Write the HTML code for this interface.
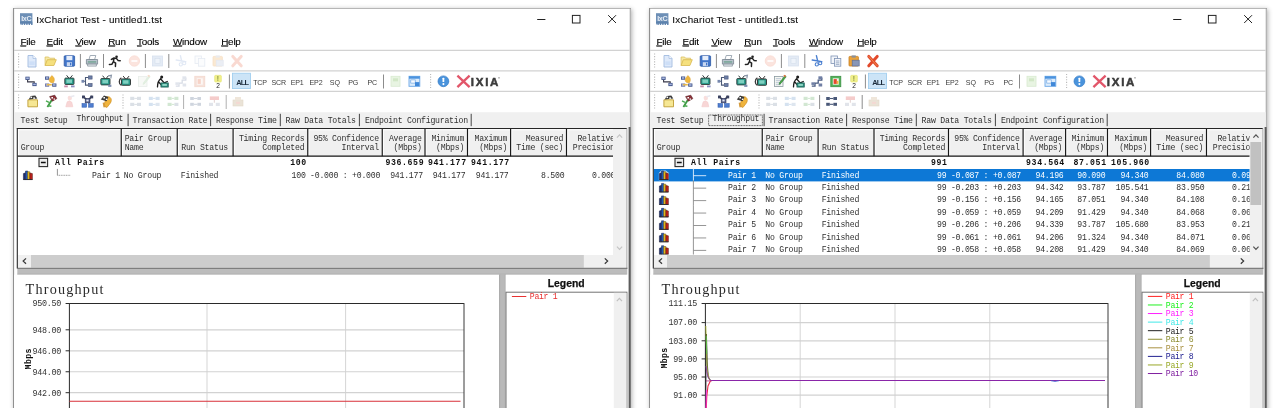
<!DOCTYPE html>
<html lang="en"><head><meta charset="utf-8"><title>IxChariot Test - untitled1.tst</title>
<style>
html,body{margin:0;padding:0;background:#fff;}
body{width:1280px;height:408px;overflow:hidden;position:relative;}
.sh{position:absolute;top:8px;width:617px;height:420px;box-shadow:1px 1px 4.5px 0.5px rgba(0,0,0,.3);background:#fff;}
svg{position:absolute;left:0;top:0;will-change:transform;}
text{font-family:"Liberation Mono",monospace;font-size:8.2px;fill:#303030;white-space:pre;}
.m{letter-spacing:-0.24px;}
.w{fill:#ffffff;}
.mb{font-weight:bold;letter-spacing:0.62px;fill:#111;}
.ax{font-size:8.4px;letter-spacing:-0.3px;fill:#333;}
.lm{font-size:8.2px;letter-spacing:-0.32px;}
.mbps{font-weight:bold;font-size:8.2px;letter-spacing:0.4px;fill:#111;}
.gt{font-family:"Liberation Serif",serif;font-size:14.2px;letter-spacing:1.2px;fill:#2a2a2a;}
.title{font-family:"Liberation Sans",sans-serif;font-size:9.9px;letter-spacing:0.22px;fill:#111;stroke:#111;stroke-width:0.12px;}
.mn{font-family:"Liberation Sans",sans-serif;font-size:9.9px;letter-spacing:-0.22px;fill:#000;stroke:#000;stroke-width:0.12px;}
.tb{font-family:"Liberation Sans",sans-serif;font-size:7.1px;letter-spacing:-0.15px;fill:#3c3c3c;}
.tbb{font-family:"Liberation Sans",sans-serif;font-size:7.4px;font-weight:bold;letter-spacing:-0.7px;fill:#1a2a3a;}
.tiny{font-family:"Liberation Sans",sans-serif;font-size:6.6px;}
.ticon{font-family:"Liberation Sans",sans-serif;font-size:7.2px;font-weight:bold;letter-spacing:-0.35px;fill:#e6edf5;}
.ixia{font-family:"Liberation Sans",sans-serif;font-size:11.5px;font-weight:bold;fill:#3c3c3c;letter-spacing:1.75px;stroke:#3c3c3c;stroke-width:0.5px;}
.lg{font-family:"Liberation Sans",sans-serif;font-size:10.4px;font-weight:bold;fill:#111;stroke:#111;stroke-width:0.25px;}
</style></head>
<body>
<div class="sh" style="left:13px"></div>
<div class="sh" style="left:649px"></div>
<svg width="1280" height="408" viewBox="0 0 1280 408">
<defs><filter id="gb" x="0" y="0" width="100%" height="100%"><feGaussianBlur stdDeviation="0.3"/></filter><filter id="soft" x="-2%" y="-10%" width="104%" height="120%"><feGaussianBlur stdDeviation="0.4"/></filter></defs>
<g transform="translate(0,0)" filter="url(#gb)">
<rect x="13.60" y="8.10" width="616.80" height="420.00" fill="#ffffff" stroke="#858585" stroke-width="1.0" />
<line x1="630.40" y1="8.60" x2="630.40" y2="127.20" stroke="#b4b4b4" stroke-width="1.2" />
<rect x="20.00" y="13.20" width="12.40" height="11.60" fill="#6d8fb6" />
<rect x="20.00" y="21.60" width="12.40" height="3.20" fill="#5d82ad" />
<text x="26.20" y="21.00" class="ticon" text-anchor="middle" >IxC</text>
<line x1="20.40" y1="24.40" x2="32.40" y2="24.40" stroke="#ffffff" stroke-width="1.2" stroke-dasharray="1 1.4"/>
<text x="36.20" y="23.20" class="title" >IxChariot Test - untitled1.tst</text>
<line x1="537.20" y1="19.50" x2="545.40" y2="19.50" stroke="#222" stroke-width="1.0" />
<rect x="572.40" y="15.40" width="7.60" height="7.60" fill="none" stroke="#222" stroke-width="1.0" />
<path d="M608.2 15.2l7.8 7.8M616 15.2l-7.8 7.8" fill="none" stroke="#222" stroke-width="1.0" />
<text x="20.40" y="44.50" class="mn"><tspan text-decoration="underline">F</tspan>ile</text>
<text x="46.60" y="44.50" class="mn"><tspan text-decoration="underline">E</tspan>dit</text>
<text x="75.40" y="44.50" class="mn"><tspan text-decoration="underline">V</tspan>iew</text>
<text x="108.20" y="44.50" class="mn"><tspan text-decoration="underline">R</tspan>un</text>
<text x="137.00" y="44.50" class="mn"><tspan text-decoration="underline">T</tspan>ools</text>
<text x="173.00" y="44.50" class="mn"><tspan text-decoration="underline">W</tspan>indow</text>
<text x="221.20" y="44.50" class="mn"><tspan text-decoration="underline">H</tspan>elp</text>
<line x1="14.10" y1="50.40" x2="629.70" y2="50.40" stroke="#d2d2d2" stroke-width="1.3" />
<line x1="14.10" y1="70.90" x2="629.70" y2="70.90" stroke="#d2d2d2" stroke-width="1.3" />
<line x1="14.10" y1="91.30" x2="629.70" y2="91.30" stroke="#d2d2d2" stroke-width="1.3" />
<rect x="14.10" y="112.20" width="615.60" height="16.60" fill="#f0f0f0" />
<g filter="url(#soft)">
<line x1="18.60" y1="53.50" x2="18.60" y2="68.50" stroke="#b8b8b8" stroke-width="1.1" stroke-dasharray="1.1 1.5"/>
<path d="M28 55.5h5l3 3v8.5h-8z" fill="#dfeafa" stroke="#a3bce0" stroke-width="0.9" />
<path d="M33 55.5v3h3" fill="#f6f9fe" stroke="#a3bce0" stroke-width="0.7" />
<rect x="29.40" y="61.40" width="5.20" height="3.60" fill="#c9dcf6" opacity="0.8" />
<path d="M45.1 65.5v-8.5h3.5l1 1.2h5v2" fill="#f7e9a4" stroke="#dcc062" stroke-width="0.8" />
<path d="M45.1 65.5l2.2-5.8h9l-2.4 5.8z" fill="#f5e07e" stroke="#d8b84e" stroke-width="0.8" />
<rect x="64.20" y="55.80" width="10.40" height="10.40" fill="#3f74c9" stroke="#2d59a5" stroke-width="0.8" rx="0.8" />
<rect x="66.40" y="56.00" width="6.00" height="4.20" fill="#e6eefb" />
<rect x="66.80" y="62.20" width="5.20" height="3.80" fill="#c8d7f0" />
<rect x="70.00" y="62.80" width="1.30" height="2.60" fill="#3f74c9" />
<line x1="80.40" y1="54.00" x2="80.40" y2="68.00" stroke="#8c8c8c" stroke-width="1.0" />
<path d="M89 59.5l1.2-4h5.6l-1.2 4z" fill="#ffffff" stroke="#8c98a5" stroke-width="0.8" />
<path d="M86.4 59.5h11.2v4.6h-11.2z" fill="#b9c3cd" stroke="#77848f" stroke-width="0.8" />
<path d="M87.6 64.1h8.8v2h-8.8z" fill="#e6ebef" stroke="#7e8a94" stroke-width="0.7" />
<rect x="87.80" y="61.40" width="8.40" height="1.10" fill="#5f9a82" />
<line x1="103.50" y1="54.00" x2="103.50" y2="68.00" stroke="#8c8c8c" stroke-width="1.0" />
<circle cx="116.60" cy="56.70" r="1.30" fill="#222"/>
<path d="M111.4 59.4l2.6-1.4 2.6 0.6 1.6 2 2 0.2 M114 58.4l-0.6 3.2 2.2 1.6-0.2 3.2 M113.4 61.6l-1.4 2.6-2.6 0.2" fill="none" stroke="#222" stroke-width="1.5" stroke-linecap="round" stroke-linejoin="round"/>
<g opacity="0.5">
<circle cx="134.40" cy="61.00" r="5.20" fill="#f6b9a8" stroke="#f0a08c" stroke-width="0.8" opacity="0.75"/>
<rect x="131.40" y="60.00" width="6.00" height="2.00" fill="#ffffff" opacity="0.8" />
</g>
<line x1="145.40" y1="54.00" x2="145.40" y2="68.00" stroke="#8c8c8c" stroke-width="1.0" />
<g opacity="0.6">
<rect x="152.50" y="56.00" width="10.00" height="10.00" fill="#c6d6ea" stroke="#aec2dc" stroke-width="0.8" opacity="0.8" />
<rect x="155.00" y="58.50" width="5.00" height="5.00" fill="#e6eef8" stroke="#b4c6de" stroke-width="0.6" opacity="0.9" />
</g>
<line x1="168.80" y1="54.00" x2="168.80" y2="68.00" stroke="#8c8c8c" stroke-width="1.0" />
<g opacity="0.5">
<path d="M176.2 60l9.6 1.6 M180.4 55.6l1.4 6" fill="none" stroke="#c3d2ea" stroke-width="1.4" stroke-linecap="round"/>
<circle cx="180.80" cy="64.40" r="1.60" fill="none" stroke="#c3d2ea" stroke-width="1.1"/>
<circle cx="184.20" cy="63.20" r="1.60" fill="none" stroke="#c3d2ea" stroke-width="1.1"/>
<rect x="195.00" y="56.00" width="6.40" height="7.60" fill="#f7f9fc" stroke="#cdd7e6" stroke-width="0.8" />
<rect x="198.40" y="58.60" width="6.40" height="7.60" fill="#f7f9fc" stroke="#cdd7e6" stroke-width="0.8" />
<rect x="213.00" y="56.40" width="9.40" height="9.60" fill="#f6d3a6" stroke="#efc28e" stroke-width="0.8" rx="0.8" />
<rect x="215.60" y="55.40" width="4.20" height="2.20" fill="#d6d8dc" />
<rect x="216.20" y="60.20" width="7.00" height="5.80" fill="#d8deea" stroke="#c8d0e0" stroke-width="0.7" />
<path d="M232.8 56.4l8.4 9.4 M241.2 56.4l-8.4 9.4" fill="none" stroke="#f3b4a4" stroke-width="3.0" stroke-linecap="round"/>
</g>
<line x1="18.60" y1="74.00" x2="18.60" y2="89.00" stroke="#b8b8b8" stroke-width="1.1" stroke-dasharray="1.1 1.5"/>
<rect x="25.40" y="76.70" width="4.20" height="3.20" fill="#3c4f86" />
<rect x="26.20" y="77.40" width="2.60" height="1.60" fill="#aab8e0" />
<rect x="32.40" y="82.90" width="4.20" height="3.20" fill="#3c4f86" />
<rect x="33.20" y="83.60" width="2.60" height="1.60" fill="#aab8e0" />
<path d="M27.6 79.89999999999999v2h6.6v1.2" fill="none" stroke="#3a3a4a" stroke-width="1.1" />
<rect x="45.00" y="76.50" width="4.20" height="3.20" fill="#3c4f86" />
<rect x="45.80" y="77.20" width="2.60" height="1.60" fill="#aab8e0" />
<rect x="52.20" y="83.50" width="4.20" height="3.20" fill="#3c4f86" />
<rect x="53.00" y="84.20" width="2.60" height="1.60" fill="#aab8e0" />
<rect x="45.00" y="83.50" width="4.20" height="3.20" fill="#6b74a8" />
<rect x="45.80" y="84.20" width="2.60" height="1.60" fill="#aab8e0" />
<path d="M51.800000000000004 75.5c2.6 2 3.4 4.4 1.6 7.2c-3.6 0.4-5-1.8-3.8-4.2z" fill="#efb73e" stroke="#d99a2a" stroke-width="0.5" />
<path d="M46.800000000000004 84.7h5" fill="none" stroke="#e8b84a" stroke-width="1.6" />
<path d="M66.60000000000001 75.3l2.4 3 M72.4 75.3l-2.4 3" fill="none" stroke="#2f3b3b" stroke-width="1.0" />
<rect x="64.80" y="78.10" width="9.20" height="6.40" fill="#2b9a8a" stroke="#2f3b3b" stroke-width="0.9" rx="0.8" />
<rect x="66.40" y="79.50" width="5.60" height="3.40" fill="#7fd0c0" />
<rect x="64.20" y="85.50" width="3.60" height="1.80" fill="#c98aa8" />
<rect x="71.00" y="85.50" width="3.60" height="1.80" fill="#8e8fc0" />
<path d="M82.1 81.3h3.4 M85.5 81.3v-3.8h3 M85.5 81.3v3.8h3" fill="none" stroke="#4c5a78" stroke-width="1.1" />
<rect x="81.50" y="79.90" width="2.60" height="2.80" fill="#7687ad" />
<rect x="88.50" y="75.90" width="3.60" height="3.20" fill="#6d7fa8" stroke="#465478" stroke-width="0.6" />
<rect x="88.50" y="83.50" width="3.60" height="3.20" fill="#6d7fa8" stroke="#465478" stroke-width="0.6" />
<path d="M102.60000000000001 75.7l2.4 3 M108.4 75.7l-2.4 3" fill="none" stroke="#2f3b3b" stroke-width="1.0" />
<rect x="100.80" y="78.50" width="9.20" height="6.40" fill="#2b9a8a" stroke="#2f3b3b" stroke-width="0.9" rx="0.8" />
<rect x="102.40" y="79.90" width="5.60" height="3.40" fill="#7fd0c0" />
<path d="M108.2 75.89999999999999l3.2-0.6-0.6 3.2" fill="none" stroke="#8a96a8" stroke-width="1.2" />
<rect x="108.20" y="84.70" width="3.20" height="2.20" fill="#7f8fb0" />
<path d="M121.4 77.89999999999999c-2.8 1.6-2.8 6 0 7.6" fill="none" stroke="#3a3a3a" stroke-width="1.3" />
<path d="M123.2 76.10000000000001l2.4 3 M129 76.10000000000001l-2.4 3" fill="none" stroke="#2c2c2c" stroke-width="1.0" />
<rect x="121.50" y="78.90" width="9.00" height="6.40" fill="#2b9a8a" stroke="#2c2c2c" stroke-width="0.9" rx="0.8" />
<rect x="123.10" y="80.30" width="5.40" height="3.40" fill="#7fd0c0" />
<g opacity="0.7">
<rect x="138.40" y="76.50" width="8.60" height="10.00" fill="#f4f7f2" stroke="#dfe6e0" stroke-width="0.8" />
<path d="M149.0 75.7l-5.2 6.6-0.8 2.2 2-1.2 5.2-6.6z" fill="#d6ead4" stroke="#cfe2cc" stroke-width="0.6" />
<path d="M147.8 75.3l1.8 1.2" fill="none" stroke="#f4cdb8" stroke-width="1.6" />
</g>
<circle cx="161.70" cy="76.90" r="1.50" fill="#1f1f1f"/>
<path d="M161.1 78.3c-2.6 2-3.6 4.6-3.6 8.6 M160.9 79.3l3.4 3.6 3-1.4 M158.9 82.3l2.4 2.6" fill="none" stroke="#1f1f1f" stroke-width="1.3" stroke-linecap="round"/>
<rect x="160.90" y="82.90" width="7.40" height="4.20" fill="#2b8a7a" stroke="#1f5f56" stroke-width="0.7" />
<rect x="162.30" y="83.90" width="4.60" height="2.00" fill="#8fd6c6" />
<g opacity="0.7">
<path d="M175.8 86.1h3.2v-3h3.2v-3h3.6v-2.6" fill="none" stroke="#c8cedb" stroke-width="1.3" />
<rect x="175.40" y="82.30" width="3.40" height="2.60" fill="#d5dae4" />
<rect x="182.40" y="76.30" width="3.80" height="3.00" fill="#d5dae4" />
<rect x="182.60" y="83.50" width="3.60" height="3.00" fill="#d5dae4" />
<rect x="194.80" y="76.30" width="10.00" height="10.40" fill="#f2d6cc" stroke="#eec8ba" stroke-width="0.8" />
<rect x="196.80" y="78.30" width="6.00" height="6.40" fill="#fbf4f0" />
<rect x="197.60" y="79.10" width="3.20" height="4.80" fill="#f4c0b0" />
</g>
<rect x="214.60" y="75.30" width="6.80" height="6.80" fill="#f1f08a" stroke="#dede6a" stroke-width="0.5" rx="1" />
<text x="218.00" y="80.70" class="tiny" text-anchor="middle" style="fill:#4a5a20" >!</text>
<text x="218.00" y="87.50" class="tiny" text-anchor="middle" style="fill:#222" >2</text>
<line x1="229.40" y1="74.50" x2="229.40" y2="88.50" stroke="#8c8c8c" stroke-width="1.0" />
<rect x="232.40" y="73.20" width="18.20" height="15.40" fill="#cce4f7" stroke="#9ccbee" stroke-width="0.8" />
<text x="260.00" y="84.60" class="tb" text-anchor="middle" >TCP</text>
<text x="278.80" y="84.60" class="tb" text-anchor="middle" >SCR</text>
<text x="297.20" y="84.60" class="tb" text-anchor="middle" >EP1</text>
<text x="316.00" y="84.60" class="tb" text-anchor="middle" >EP2</text>
<text x="334.80" y="84.60" class="tb" text-anchor="middle" >SQ</text>
<text x="353.20" y="84.60" class="tb" text-anchor="middle" >PG</text>
<text x="372.20" y="84.60" class="tb" text-anchor="middle" >PC</text>
<text x="242.30" y="84.80" class="tbb" text-anchor="middle" >ALL</text>
<line x1="383.50" y1="74.50" x2="383.50" y2="88.50" stroke="#8c8c8c" stroke-width="1.0" />
<rect x="391.00" y="76.30" width="9.00" height="10.00" fill="#e6f3df" stroke="#d4e8cc" stroke-width="0.8" opacity="0.9" />
<rect x="393.00" y="78.30" width="5.00" height="3.00" fill="#cfe6c4" opacity="0.9" />
<rect x="409.00" y="76.30" width="10.80" height="10.00" fill="#dcecfb" stroke="#6aa7e6" stroke-width="0.9" />
<rect x="409.00" y="76.30" width="10.80" height="2.40" fill="#4b93de" />
<rect x="410.80" y="79.90" width="4.40" height="3.20" fill="#f8fbff" stroke="#5a9be0" stroke-width="0.6" />
<path d="M415.0 82.1h4.4v4h-4.4z" fill="#3f88d8" />
<line x1="430.60" y1="74.00" x2="430.60" y2="89.00" stroke="#b8b8b8" stroke-width="1.1" stroke-dasharray="1.1 1.5"/>
<circle cx="443.40" cy="81.30" r="5.40" fill="#4a93dc" stroke="#2f78c6" stroke-width="0.7"/>
<rect x="442.50" y="77.70" width="1.80" height="4.40" fill="#ffffff" rx="0.6" />
<circle cx="443.40" cy="84.10" r="1.05" fill="#ffffff"/>
<path d="M457.4 75.6l12.2 11.6 M469.59999999999997 75.6l-12.2 11.6" fill="none" stroke="#e2566a" stroke-width="2.3" />
<text x="470.80" y="85.75" class="ixia" >IXIA</text>
<circle cx="499.00" cy="77.80" r="0.60" fill="#444"/>
<line x1="18.60" y1="94.50" x2="18.60" y2="109.50" stroke="#b8b8b8" stroke-width="1.1" stroke-dasharray="1.1 1.5"/>
<path d="M27.900000000000002 99.80000000000001h9.6v7h-9.6z" fill="#f6e794" stroke="#bf9d36" stroke-width="0.9" />
<path d="M28.700000000000003 99.60000000000001l2-3.6 4.6-0.6 2 3z" fill="#3a3a3a" />
<rect x="30.50" y="96.60" width="1.60" height="1.50" fill="#ffffff" />
<rect x="33.30" y="97.40" width="1.60" height="1.50" fill="#ffffff" />
<path d="M47.4 107.0l4.4-7" fill="none" stroke="#3f9a45" stroke-width="1.8" />
<path d="M46 100.80000000000001l3 1.6 M48.2 105.80000000000001l3.2 0.4" fill="none" stroke="#4aaa50" stroke-width="1.4" />
<path d="M49.6 96.60000000000001l5.2-1.4 2 3.4-4.4 2.6z" fill="#8c2f36" stroke="#5a2226" stroke-width="0.6" />
<rect x="51.40" y="97.00" width="1.60" height="1.50" fill="#ffffff" />
<rect x="53.60" y="98.40" width="1.40" height="1.40" fill="#e8e8e8" />
<g opacity="0.55">
<path d="M65.80000000000001 106.80000000000001l1.4-5 2.4-1 2.2 1.4 1 4.6z" fill="#f2b4b4" stroke="#eaa0a0" stroke-width="0.6" />
<circle cx="69.80" cy="98.00" r="2.20" fill="#f4c4c0"/>
<path d="M70.4 96.80000000000001l4-1" fill="none" stroke="#d8d8e4" stroke-width="1.6" />
</g>
<path d="M82.6 96.0l4 3.6 M92.19999999999999 96.0l-3.6 3.6" fill="none" stroke="#3c3c44" stroke-width="1.5" />
<rect x="82.00" y="95.60" width="3.00" height="2.80" fill="#3a4260" />
<rect x="90.20" y="95.60" width="3.00" height="2.80" fill="#3a4260" />
<rect x="85.20" y="98.40" width="4.80" height="4.40" fill="#55608a" stroke="#2f3758" stroke-width="0.6" />
<rect x="86.40" y="99.60" width="2.20" height="1.80" fill="#e8e8f0" />
<rect x="82.00" y="103.60" width="4.60" height="3.60" fill="#4f7ed0" stroke="#3560b0" stroke-width="0.6" />
<rect x="88.60" y="103.60" width="4.60" height="3.60" fill="#4f7ed0" stroke="#3560b0" stroke-width="0.6" />
<path d="M106.4 96.80000000000001c4.2-1 6.2 2.6 4 6.2l-3.4 4.4-3.2-1.2z" fill="#f0b43c" stroke="#cf8f24" stroke-width="0.7" />
<path d="M100.8 99.4l3.2-3.8 4.4 1.4-1.8 4.2z" fill="#3a3a3a" />
<rect x="103.40" y="97.00" width="1.60" height="1.50" fill="#ffffff" />
<rect x="105.80" y="98.60" width="1.50" height="1.40" fill="#ffffff" />
<path d="M103.6 102.60000000000001l1 4.6" fill="none" stroke="#d49a3a" stroke-width="2.0" />
<line x1="123.00" y1="94.50" x2="123.00" y2="109.50" stroke="#b8b8b8" stroke-width="1.1" stroke-dasharray="1.1 1.5"/>
<g opacity="0.6">
<rect x="130.20" y="96.80" width="4.00" height="3.20" fill="#c4ccd6" />
<rect x="137.00" y="96.80" width="4.00" height="3.20" fill="#c4ccd6" />
<rect x="130.20" y="102.80" width="4.00" height="3.20" fill="#c4ccd6" />
<rect x="137.00" y="102.80" width="4.00" height="3.20" fill="#c4ccd6" />
<path d="M134.2 98.4h2.8 M134.2 104.4h2.8" fill="none" stroke="#c4ccd6" stroke-width="1" />
</g>
<g opacity="0.6">
<rect x="148.80" y="96.80" width="4.00" height="3.20" fill="#b9cfe6" />
<rect x="155.60" y="96.80" width="4.00" height="3.20" fill="#b9cfe6" />
<rect x="148.80" y="102.80" width="4.00" height="3.20" fill="#b9cfe6" />
<rect x="155.60" y="102.80" width="4.00" height="3.20" fill="#c8d6e4" />
<path d="M152.79999999999998 98.4h2.8 M152.79999999999998 104.4h2.8" fill="none" stroke="#b9cfe6" stroke-width="1" />
</g>
<g opacity="0.6">
<rect x="167.60" y="96.80" width="4.00" height="3.20" fill="#b4d8b4" />
<rect x="174.40" y="96.80" width="4.00" height="3.20" fill="#b4d8b4" />
<rect x="167.60" y="102.80" width="4.00" height="3.20" fill="#b4d8b4" />
<rect x="174.40" y="102.80" width="4.00" height="3.20" fill="#c4ccd6" />
<path d="M171.6 98.4h2.8 M171.6 104.4h2.8" fill="none" stroke="#b4d8b4" stroke-width="1" />
</g>
<line x1="183.60" y1="95.00" x2="183.60" y2="109.00" stroke="#b0b0b0" stroke-width="1" />
<rect x="190.20" y="97.00" width="3.60" height="3.00" fill="#cfd5de" />
<rect x="197.40" y="97.00" width="3.60" height="3.00" fill="#cfd5de" />
<rect x="190.20" y="102.80" width="3.60" height="3.00" fill="#cfd5de" />
<rect x="197.40" y="102.80" width="3.60" height="3.00" fill="#cfd5de" />
<line x1="193.80" y1="98.50" x2="197.40" y2="98.50" stroke="#cfd5de" stroke-width="1.1" />
<line x1="193.80" y1="104.30" x2="197.40" y2="104.30" stroke="#cfd5de" stroke-width="1.1" />
<g opacity="0.6">
<rect x="209.80" y="96.40" width="9.20" height="3.60" fill="#eeaaa8" />
<rect x="209.00" y="102.80" width="4.00" height="3.20" fill="#cdd3dc" />
<rect x="215.80" y="102.80" width="4.00" height="3.20" fill="#cdd3dc" />
<line x1="214.40" y1="100.00" x2="214.40" y2="102.80" stroke="#d8c0c0" stroke-width="1.2" />
</g>
<line x1="226.20" y1="95.00" x2="226.20" y2="109.00" stroke="#b0b0b0" stroke-width="1" />
<g opacity="0.7">
<rect x="233.00" y="100.00" width="10.00" height="6.00" fill="#e2d8c6" stroke="#d6cab4" stroke-width="0.6" />
<rect x="235.00" y="97.00" width="6.00" height="3.40" fill="#e8dccb" />
<rect x="236.00" y="101.80" width="4.00" height="2.00" fill="#f0c8c0" />
</g>
</g>
<text x="20.60" y="123.10" class="m" >Test Setup</text>
<text x="76.50" y="121.40" class="m" >Throughput</text>
<text x="132.50" y="123.10" class="m" >Transaction Rate</text>
<text x="216.00" y="123.10" class="m" >Response Time</text>
<text x="285.60" y="123.10" class="m" >Raw Data Totals</text>
<text x="365.00" y="123.10" class="m" >Endpoint Configuration</text>
<line x1="128.10" y1="113.80" x2="128.10" y2="126.20" stroke="#444" stroke-width="1.0" />
<line x1="210.60" y1="113.80" x2="210.60" y2="126.20" stroke="#444" stroke-width="1.0" />
<line x1="280.30" y1="113.80" x2="280.30" y2="126.20" stroke="#444" stroke-width="1.0" />
<line x1="359.40" y1="113.80" x2="359.40" y2="126.20" stroke="#444" stroke-width="1.0" />
<line x1="471.20" y1="113.80" x2="471.20" y2="126.20" stroke="#444" stroke-width="1.0" />
<rect x="17.30" y="128.50" width="609.60" height="140.00" fill="#ffffff" />
<rect x="17.30" y="128.50" width="595.70" height="27.50" fill="#f0f0f0" />
<clipPath id="hc0"><rect x="17.3" y="128.5" width="595.70" height="126"/></clipPath>
<g clip-path="url(#hc0)">
<line x1="18.50" y1="129.60" x2="18.50" y2="155.00" stroke="#ffffff" stroke-width="0.9" />
<line x1="122.45" y1="129.60" x2="122.45" y2="155.00" stroke="#ffffff" stroke-width="0.9" />
<line x1="178.45" y1="129.60" x2="178.45" y2="155.00" stroke="#ffffff" stroke-width="0.9" />
<line x1="234.30" y1="129.60" x2="234.30" y2="155.00" stroke="#ffffff" stroke-width="0.9" />
<line x1="308.95" y1="129.60" x2="308.95" y2="155.00" stroke="#ffffff" stroke-width="0.9" />
<line x1="383.45" y1="129.60" x2="383.45" y2="155.00" stroke="#ffffff" stroke-width="0.9" />
<line x1="426.20" y1="129.60" x2="426.20" y2="155.00" stroke="#ffffff" stroke-width="0.9" />
<line x1="468.70" y1="129.60" x2="468.70" y2="155.00" stroke="#ffffff" stroke-width="0.9" />
<line x1="511.80" y1="129.60" x2="511.80" y2="155.00" stroke="#ffffff" stroke-width="0.9" />
<line x1="567.70" y1="129.60" x2="567.70" y2="155.00" stroke="#ffffff" stroke-width="0.9" />
<line x1="17.30" y1="129.80" x2="613.00" y2="129.80" stroke="#ffffff" stroke-width="0.9" />
<line x1="121.25" y1="128.50" x2="121.25" y2="156.20" stroke="#161616" stroke-width="1.15" />
<line x1="177.25" y1="128.50" x2="177.25" y2="156.20" stroke="#161616" stroke-width="1.15" />
<line x1="233.10" y1="128.50" x2="233.10" y2="156.20" stroke="#161616" stroke-width="1.15" />
<line x1="307.75" y1="128.50" x2="307.75" y2="156.20" stroke="#161616" stroke-width="1.15" />
<line x1="382.25" y1="128.50" x2="382.25" y2="156.20" stroke="#161616" stroke-width="1.15" />
<line x1="425.00" y1="128.50" x2="425.00" y2="156.20" stroke="#161616" stroke-width="1.15" />
<line x1="467.50" y1="128.50" x2="467.50" y2="156.20" stroke="#161616" stroke-width="1.15" />
<line x1="510.60" y1="128.50" x2="510.60" y2="156.20" stroke="#161616" stroke-width="1.15" />
<line x1="566.50" y1="128.50" x2="566.50" y2="156.20" stroke="#161616" stroke-width="1.15" />
<line x1="17.30" y1="156.10" x2="613.00" y2="156.10" stroke="#161616" stroke-width="1.15" />
<text x="20.70" y="149.60" class="m" >Group</text>
<text x="124.65" y="140.70" class="m" >Pair Group</text>
<text x="124.65" y="149.60" class="m" >Name</text>
<text x="181.25" y="149.60" class="m" >Run Status</text>
<text x="304.35" y="140.70" class="m" text-anchor="end" >Timing Records</text>
<text x="304.35" y="149.60" class="m" text-anchor="end" >Completed</text>
<text x="378.85" y="140.70" class="m" text-anchor="end" >95% Confidence</text>
<text x="378.85" y="149.60" class="m" text-anchor="end" >Interval</text>
<text x="421.60" y="140.70" class="m" text-anchor="end" >Average</text>
<text x="421.60" y="149.60" class="m" text-anchor="end" >(Mbps)</text>
<text x="464.10" y="140.70" class="m" text-anchor="end" >Minimum</text>
<text x="464.10" y="149.60" class="m" text-anchor="end" >(Mbps)</text>
<text x="507.20" y="140.70" class="m" text-anchor="end" >Maximum</text>
<text x="507.20" y="149.60" class="m" text-anchor="end" >(Mbps)</text>
<text x="563.10" y="140.70" class="m" text-anchor="end" >Measured</text>
<text x="563.10" y="149.60" class="m" text-anchor="end" >Time (sec)</text>
<text x="614.80" y="140.70" class="m" text-anchor="end" >Relative</text>
<text x="614.80" y="149.60" class="m" text-anchor="end" >Precision</text>
<rect x="39.00" y="158.30" width="8.60" height="8.30" fill="#ececec" stroke="#2a2a2a" stroke-width="1.1" />
<line x1="40.90" y1="162.50" x2="45.70" y2="162.50" stroke="#111" stroke-width="1.3" />
<text x="55.00" y="165.00" class="mb" >All Pairs</text>
<text x="306.75" y="165.00" class="mb" text-anchor="end" >100</text>
<text x="424.20" y="165.00" class="mb" text-anchor="end" >936.659</text>
<text x="466.70" y="165.00" class="mb" text-anchor="end" >941.177</text>
<text x="509.80" y="165.00" class="mb" text-anchor="end" >941.177</text>
<path d="M23.4 179.6v-6l2.2-0.8v6.8z" fill="#1c2c74" stroke="#151a3a" stroke-width="0.5" />
<path d="M25.5 179.6v-8.6h2.3v8.6z" fill="#2058b0" stroke="#1a2750" stroke-width="0.5" />
<path d="M27.7 179.6v-7.8h2.2v7.8z" fill="#ecc320" stroke="#6a5510" stroke-width="0.5" />
<path d="M29.799999999999997 179.6v-6.6l2.6 0.6v6z" fill="#bc221c" stroke="#4a1210" stroke-width="0.5" />
<rect x="23.30" y="179.10" width="9.20" height="0.90" fill="#2a2a30" />
<line x1="57.40" y1="168.90" x2="57.40" y2="175.30" stroke="#8a8a8a" stroke-width="0.9" />
<line x1="57.40" y1="175.30" x2="70.20" y2="175.30" stroke="#8a8a8a" stroke-width="0.9" stroke-dasharray="1 0.7"/>
<text x="92.00" y="177.50" class="m" >Pair 1</text>
<text x="123.85" y="177.50" class="m" >No Group</text>
<text x="180.85" y="177.50" class="m" >Finished</text>
<text x="305.65" y="177.50" class="m" text-anchor="end" >100</text>
<text x="380.15" y="177.50" class="m" text-anchor="end" >-0.000 : +0.000</text>
<text x="422.90" y="177.50" class="m" text-anchor="end" >941.177</text>
<text x="465.40" y="177.50" class="m" text-anchor="end" >941.177</text>
<text x="508.50" y="177.50" class="m" text-anchor="end" >941.177</text>
<text x="564.40" y="177.50" class="m" text-anchor="end" >8.500</text>
<text x="615.30" y="177.50" class="m" text-anchor="end" >0.000</text>
</g>
<rect x="613.00" y="129.00" width="13.90" height="126.00" fill="#f0f0f0" />
<path d="M616.95 137.6l2.6-2.8 2.6 2.8" fill="none" stroke="#c4c4c4" stroke-width="1.2" />
<path d="M616.95 246.6l2.6 2.8 2.6-2.8" fill="none" stroke="#c4c4c4" stroke-width="1.2" />
<rect x="17.80" y="255.00" width="609.10" height="12.60" fill="#f0f0f0" />
<rect x="31.00" y="255.00" width="552.80" height="12.60" fill="#cdcdcd" />
<path d="M26 258.4l-2.8 2.7 2.8 2.7" fill="none" stroke="#3a3a3a" stroke-width="1.3" />
<path d="M604.8 258.4l2.8 2.7-2.8 2.7" fill="none" stroke="#3a3a3a" stroke-width="1.3" />
<line x1="17.30" y1="128.20" x2="17.30" y2="268.50" stroke="#262626" stroke-width="1.1" />
<line x1="16.80" y1="128.50" x2="626.90" y2="128.50" stroke="#262626" stroke-width="1.1" />
<line x1="626.90" y1="128.50" x2="626.90" y2="268.50" stroke="#a8a8a8" stroke-width="1.0" />
<line x1="17.30" y1="268.30" x2="627.40" y2="268.30" stroke="#4a4a4a" stroke-width="1.0" />
<rect x="17.30" y="268.80" width="610.00" height="5.80" fill="#bcbcbc" />
<line x1="17.30" y1="274.30" x2="626.90" y2="274.30" stroke="#a6a6a6" stroke-width="0.8" />
<rect x="14.10" y="274.70" width="485.30" height="140.00" fill="#ffffff" />
<rect x="499.40" y="274.70" width="6.20" height="140.00" fill="#b9b9b9" />
<line x1="499.60" y1="274.70" x2="499.60" y2="415.00" stroke="#9c9c9c" stroke-width="0.8" />
<line x1="505.40" y1="274.70" x2="505.40" y2="415.00" stroke="#9c9c9c" stroke-width="0.8" />
<rect x="505.60" y="274.70" width="121.70" height="140.00" fill="#ffffff" />
<text x="25.6" y="293.8" class="gt">Throughput</text>
<line x1="69.40" y1="329.80" x2="464.00" y2="329.80" stroke="#d2d2d2" stroke-width="1.2" />
<line x1="69.40" y1="350.80" x2="464.00" y2="350.80" stroke="#d2d2d2" stroke-width="1.2" />
<line x1="69.40" y1="371.75" x2="464.00" y2="371.75" stroke="#d2d2d2" stroke-width="1.2" />
<line x1="69.40" y1="392.70" x2="464.00" y2="392.70" stroke="#d2d2d2" stroke-width="1.2" />
<line x1="207.00" y1="303.50" x2="207.00" y2="410.00" stroke="#d0d0d0" stroke-width="0.9" />
<line x1="345.60" y1="303.50" x2="345.60" y2="410.00" stroke="#d0d0d0" stroke-width="0.9" />
<line x1="65.60" y1="303.50" x2="69.40" y2="303.50" stroke="#2a2a2a" stroke-width="1.0" />
<text x="60.90" y="306.30" class="ax" text-anchor="end" >950.50</text>
<line x1="65.60" y1="329.80" x2="69.40" y2="329.80" stroke="#2a2a2a" stroke-width="1.0" />
<text x="60.90" y="332.60" class="ax" text-anchor="end" >948.00</text>
<line x1="65.60" y1="350.80" x2="69.40" y2="350.80" stroke="#2a2a2a" stroke-width="1.0" />
<text x="60.90" y="353.60" class="ax" text-anchor="end" >946.00</text>
<line x1="65.60" y1="371.75" x2="69.40" y2="371.75" stroke="#2a2a2a" stroke-width="1.0" />
<text x="60.90" y="374.55" class="ax" text-anchor="end" >944.00</text>
<line x1="65.60" y1="392.70" x2="69.40" y2="392.70" stroke="#2a2a2a" stroke-width="1.0" />
<text x="60.90" y="395.50" class="ax" text-anchor="end" >942.00</text>
<line x1="69.40" y1="303.50" x2="464.00" y2="303.50" stroke="#2a2a2a" stroke-width="1.0" />
<line x1="69.40" y1="303.10" x2="69.40" y2="410.00" stroke="#2a2a2a" stroke-width="1.0" />
<line x1="464.00" y1="303.10" x2="464.00" y2="410.00" stroke="#3a3a3a" stroke-width="1.0" />
<text transform="translate(30.6,369.40) rotate(-90)" class="mbps">Mbps</text>
<line x1="69.40" y1="401.30" x2="460.50" y2="401.30" stroke="#d83038" stroke-width="1.1" />
<line x1="629.50" y1="127.00" x2="629.50" y2="420.00" stroke="#5c5c5c" stroke-width="1.8" />
<text x="566.20" y="286.90" class="lg" text-anchor="middle" >Legend</text>
<rect x="506.00" y="292.20" width="120.90" height="125.00" fill="#ffffff" stroke="#727272" stroke-width="1.0" />
<rect x="613.80" y="292.80" width="12.70" height="125.00" fill="#f0f0f0" />
<path d="M616.8 301.2l2.6-2.8 2.6 2.8" fill="none" stroke="#c0c0c0" stroke-width="1.2" />
<line x1="511.90" y1="296.50" x2="526.30" y2="296.50" stroke="#e83030" stroke-width="1.0" />
<text x="529.80" y="299.40" class="lm" style="fill:#e83030" >Pair 1</text>
</g>
<g transform="translate(636,0)" filter="url(#gb)">
<rect x="13.60" y="8.10" width="616.80" height="420.00" fill="#ffffff" stroke="#858585" stroke-width="1.0" />
<line x1="630.40" y1="8.60" x2="630.40" y2="127.20" stroke="#b4b4b4" stroke-width="1.2" />
<rect x="20.00" y="13.20" width="12.40" height="11.60" fill="#6d8fb6" />
<rect x="20.00" y="21.60" width="12.40" height="3.20" fill="#5d82ad" />
<text x="26.20" y="21.00" class="ticon" text-anchor="middle" >IxC</text>
<line x1="20.40" y1="24.40" x2="32.40" y2="24.40" stroke="#ffffff" stroke-width="1.2" stroke-dasharray="1 1.4"/>
<text x="36.20" y="23.20" class="title" >IxChariot Test - untitled1.tst</text>
<line x1="537.20" y1="19.50" x2="545.40" y2="19.50" stroke="#222" stroke-width="1.0" />
<rect x="572.40" y="15.40" width="7.60" height="7.60" fill="none" stroke="#222" stroke-width="1.0" />
<path d="M608.2 15.2l7.8 7.8M616 15.2l-7.8 7.8" fill="none" stroke="#222" stroke-width="1.0" />
<text x="20.40" y="44.50" class="mn"><tspan text-decoration="underline">F</tspan>ile</text>
<text x="46.60" y="44.50" class="mn"><tspan text-decoration="underline">E</tspan>dit</text>
<text x="75.40" y="44.50" class="mn"><tspan text-decoration="underline">V</tspan>iew</text>
<text x="108.20" y="44.50" class="mn"><tspan text-decoration="underline">R</tspan>un</text>
<text x="137.00" y="44.50" class="mn"><tspan text-decoration="underline">T</tspan>ools</text>
<text x="173.00" y="44.50" class="mn"><tspan text-decoration="underline">W</tspan>indow</text>
<text x="221.20" y="44.50" class="mn"><tspan text-decoration="underline">H</tspan>elp</text>
<line x1="14.10" y1="50.40" x2="629.70" y2="50.40" stroke="#d2d2d2" stroke-width="1.3" />
<line x1="14.10" y1="70.90" x2="629.70" y2="70.90" stroke="#d2d2d2" stroke-width="1.3" />
<line x1="14.10" y1="91.30" x2="629.70" y2="91.30" stroke="#d2d2d2" stroke-width="1.3" />
<rect x="14.10" y="112.20" width="615.60" height="16.60" fill="#f0f0f0" />
<g filter="url(#soft)">
<line x1="18.60" y1="53.50" x2="18.60" y2="68.50" stroke="#b8b8b8" stroke-width="1.1" stroke-dasharray="1.1 1.5"/>
<path d="M28 55.5h5l3 3v8.5h-8z" fill="#dfeafa" stroke="#a3bce0" stroke-width="0.9" />
<path d="M33 55.5v3h3" fill="#f6f9fe" stroke="#a3bce0" stroke-width="0.7" />
<rect x="29.40" y="61.40" width="5.20" height="3.60" fill="#c9dcf6" opacity="0.8" />
<path d="M45.1 65.5v-8.5h3.5l1 1.2h5v2" fill="#f7e9a4" stroke="#dcc062" stroke-width="0.8" />
<path d="M45.1 65.5l2.2-5.8h9l-2.4 5.8z" fill="#f5e07e" stroke="#d8b84e" stroke-width="0.8" />
<rect x="64.20" y="55.80" width="10.40" height="10.40" fill="#3f74c9" stroke="#2d59a5" stroke-width="0.8" rx="0.8" />
<rect x="66.40" y="56.00" width="6.00" height="4.20" fill="#e6eefb" />
<rect x="66.80" y="62.20" width="5.20" height="3.80" fill="#c8d7f0" />
<rect x="70.00" y="62.80" width="1.30" height="2.60" fill="#3f74c9" />
<line x1="80.40" y1="54.00" x2="80.40" y2="68.00" stroke="#8c8c8c" stroke-width="1.0" />
<path d="M89 59.5l1.2-4h5.6l-1.2 4z" fill="#ffffff" stroke="#8c98a5" stroke-width="0.8" />
<path d="M86.4 59.5h11.2v4.6h-11.2z" fill="#b9c3cd" stroke="#77848f" stroke-width="0.8" />
<path d="M87.6 64.1h8.8v2h-8.8z" fill="#e6ebef" stroke="#7e8a94" stroke-width="0.7" />
<rect x="87.80" y="61.40" width="8.40" height="1.10" fill="#5f9a82" />
<line x1="103.50" y1="54.00" x2="103.50" y2="68.00" stroke="#8c8c8c" stroke-width="1.0" />
<circle cx="116.60" cy="56.70" r="1.30" fill="#222"/>
<path d="M111.4 59.4l2.6-1.4 2.6 0.6 1.6 2 2 0.2 M114 58.4l-0.6 3.2 2.2 1.6-0.2 3.2 M113.4 61.6l-1.4 2.6-2.6 0.2" fill="none" stroke="#222" stroke-width="1.5" stroke-linecap="round" stroke-linejoin="round"/>
<g opacity="0.5">
<circle cx="134.40" cy="61.00" r="5.20" fill="#f6b9a8" stroke="#f0a08c" stroke-width="0.8" opacity="0.75"/>
<rect x="131.40" y="60.00" width="6.00" height="2.00" fill="#ffffff" opacity="0.8" />
</g>
<line x1="145.40" y1="54.00" x2="145.40" y2="68.00" stroke="#8c8c8c" stroke-width="1.0" />
<g opacity="0.6">
<rect x="152.50" y="56.00" width="10.00" height="10.00" fill="#c6d6ea" stroke="#aec2dc" stroke-width="0.8" opacity="0.8" />
<rect x="155.00" y="58.50" width="5.00" height="5.00" fill="#e6eef8" stroke="#b4c6de" stroke-width="0.6" opacity="0.9" />
</g>
<line x1="168.80" y1="54.00" x2="168.80" y2="68.00" stroke="#8c8c8c" stroke-width="1.0" />
<g opacity="1">
<path d="M176.2 60l9.6 1.6 M180.4 55.6l1.4 6" fill="none" stroke="#4a7fd0" stroke-width="1.4" stroke-linecap="round"/>
<circle cx="180.80" cy="64.40" r="1.60" fill="none" stroke="#4a7fd0" stroke-width="1.1"/>
<circle cx="184.20" cy="63.20" r="1.60" fill="none" stroke="#4a7fd0" stroke-width="1.1"/>
<rect x="195.00" y="56.00" width="6.40" height="7.60" fill="#f2f5fa" stroke="#7f93b4" stroke-width="0.8" />
<rect x="198.40" y="58.60" width="6.40" height="7.60" fill="#f2f5fa" stroke="#7f93b4" stroke-width="0.8" />
<line x1="199.80" y1="61.00" x2="203.40" y2="61.00" stroke="#7f93b4" stroke-width="0.7" />
<line x1="199.80" y1="62.80" x2="203.40" y2="62.80" stroke="#7f93b4" stroke-width="0.7" />
<line x1="199.80" y1="64.40" x2="203.40" y2="64.40" stroke="#7f93b4" stroke-width="0.7" />
<rect x="213.00" y="56.40" width="9.40" height="9.60" fill="#e9a23a" stroke="#c77f22" stroke-width="0.8" rx="0.8" />
<rect x="215.60" y="55.40" width="4.20" height="2.20" fill="#8a8f98" />
<rect x="216.20" y="60.20" width="7.00" height="5.80" fill="#8796b8" stroke="#5e6f96" stroke-width="0.7" />
<path d="M232.8 56.4l8.4 9.4 M241.2 56.4l-8.4 9.4" fill="none" stroke="#e2492c" stroke-width="3.0" stroke-linecap="round"/>
<path d="M232.8 56.4l8.4 9.4" fill="none" stroke="#f08a4a" stroke-width="1.0" stroke-linecap="round"/>
</g>
<line x1="18.60" y1="74.00" x2="18.60" y2="89.00" stroke="#b8b8b8" stroke-width="1.1" stroke-dasharray="1.1 1.5"/>
<rect x="25.40" y="76.70" width="4.20" height="3.20" fill="#3c4f86" />
<rect x="26.20" y="77.40" width="2.60" height="1.60" fill="#aab8e0" />
<rect x="32.40" y="82.90" width="4.20" height="3.20" fill="#3c4f86" />
<rect x="33.20" y="83.60" width="2.60" height="1.60" fill="#aab8e0" />
<path d="M27.6 79.89999999999999v2h6.6v1.2" fill="none" stroke="#3a3a4a" stroke-width="1.1" />
<rect x="45.00" y="76.50" width="4.20" height="3.20" fill="#3c4f86" />
<rect x="45.80" y="77.20" width="2.60" height="1.60" fill="#aab8e0" />
<rect x="52.20" y="83.50" width="4.20" height="3.20" fill="#3c4f86" />
<rect x="53.00" y="84.20" width="2.60" height="1.60" fill="#aab8e0" />
<rect x="45.00" y="83.50" width="4.20" height="3.20" fill="#6b74a8" />
<rect x="45.80" y="84.20" width="2.60" height="1.60" fill="#aab8e0" />
<path d="M51.800000000000004 75.5c2.6 2 3.4 4.4 1.6 7.2c-3.6 0.4-5-1.8-3.8-4.2z" fill="#efb73e" stroke="#d99a2a" stroke-width="0.5" />
<path d="M46.800000000000004 84.7h5" fill="none" stroke="#e8b84a" stroke-width="1.6" />
<path d="M66.60000000000001 75.3l2.4 3 M72.4 75.3l-2.4 3" fill="none" stroke="#2f3b3b" stroke-width="1.0" />
<rect x="64.80" y="78.10" width="9.20" height="6.40" fill="#2b9a8a" stroke="#2f3b3b" stroke-width="0.9" rx="0.8" />
<rect x="66.40" y="79.50" width="5.60" height="3.40" fill="#7fd0c0" />
<rect x="64.20" y="85.50" width="3.60" height="1.80" fill="#c98aa8" />
<rect x="71.00" y="85.50" width="3.60" height="1.80" fill="#8e8fc0" />
<path d="M82.1 81.3h3.4 M85.5 81.3v-3.8h3 M85.5 81.3v3.8h3" fill="none" stroke="#4c5a78" stroke-width="1.1" />
<rect x="81.50" y="79.90" width="2.60" height="2.80" fill="#7687ad" />
<rect x="88.50" y="75.90" width="3.60" height="3.20" fill="#6d7fa8" stroke="#465478" stroke-width="0.6" />
<rect x="88.50" y="83.50" width="3.60" height="3.20" fill="#6d7fa8" stroke="#465478" stroke-width="0.6" />
<path d="M102.60000000000001 75.7l2.4 3 M108.4 75.7l-2.4 3" fill="none" stroke="#2f3b3b" stroke-width="1.0" />
<rect x="100.80" y="78.50" width="9.20" height="6.40" fill="#2b9a8a" stroke="#2f3b3b" stroke-width="0.9" rx="0.8" />
<rect x="102.40" y="79.90" width="5.60" height="3.40" fill="#7fd0c0" />
<path d="M108.2 75.89999999999999l3.2-0.6-0.6 3.2" fill="none" stroke="#8a96a8" stroke-width="1.2" />
<rect x="108.20" y="84.70" width="3.20" height="2.20" fill="#7f8fb0" />
<path d="M121.4 77.89999999999999c-2.8 1.6-2.8 6 0 7.6" fill="none" stroke="#3a3a3a" stroke-width="1.3" />
<path d="M123.2 76.10000000000001l2.4 3 M129 76.10000000000001l-2.4 3" fill="none" stroke="#2c2c2c" stroke-width="1.0" />
<rect x="121.50" y="78.90" width="9.00" height="6.40" fill="#2b9a8a" stroke="#2c2c2c" stroke-width="0.9" rx="0.8" />
<rect x="123.10" y="80.30" width="5.40" height="3.40" fill="#7fd0c0" />
<g opacity="1">
<rect x="138.40" y="76.50" width="8.60" height="10.00" fill="#f6f8f4" stroke="#8a9aa0" stroke-width="0.8" />
<line x1="139.80" y1="78.70" x2="145.00" y2="78.70" stroke="#9fb0c4" stroke-width="0.7" />
<line x1="139.80" y1="80.70" x2="145.00" y2="80.70" stroke="#9fb0c4" stroke-width="0.7" />
<line x1="139.80" y1="82.70" x2="145.00" y2="82.70" stroke="#9fb0c4" stroke-width="0.7" />
<line x1="139.80" y1="84.70" x2="145.00" y2="84.70" stroke="#9fb0c4" stroke-width="0.7" />
<path d="M149.0 75.7l-5.2 6.6-0.8 2.2 2-1.2 5.2-6.6z" fill="#4aa84a" stroke="#2e7a34" stroke-width="0.6" />
<path d="M147.8 75.3l1.8 1.2" fill="none" stroke="#e0703a" stroke-width="1.6" />
</g>
<circle cx="161.70" cy="76.90" r="1.50" fill="#1f1f1f"/>
<path d="M161.1 78.3c-2.6 2-3.6 4.6-3.6 8.6 M160.9 79.3l3.4 3.6 3-1.4 M158.9 82.3l2.4 2.6" fill="none" stroke="#1f1f1f" stroke-width="1.3" stroke-linecap="round"/>
<rect x="160.90" y="82.90" width="7.40" height="4.20" fill="#2b8a7a" stroke="#1f5f56" stroke-width="0.7" />
<rect x="162.30" y="83.90" width="4.60" height="2.00" fill="#8fd6c6" />
<g opacity="1">
<path d="M175.8 86.1h3.2v-3h3.2v-3h3.6v-2.6" fill="none" stroke="#495a80" stroke-width="1.3" />
<rect x="175.40" y="82.30" width="3.40" height="2.60" fill="#6f7fa4" />
<rect x="182.40" y="76.30" width="3.80" height="3.00" fill="#6f7fa4" />
<rect x="182.60" y="83.50" width="3.60" height="3.00" fill="#6f7fa4" />
<rect x="194.80" y="76.30" width="10.00" height="10.40" fill="#54b35a" stroke="#3b8f43" stroke-width="0.8" />
<rect x="196.80" y="78.30" width="6.00" height="6.40" fill="#f4f4ee" />
<rect x="197.60" y="79.10" width="3.20" height="4.80" fill="#e5492e" />
<rect x="200.80" y="80.90" width="1.60" height="3.00" fill="#f0b43a" />
</g>
<rect x="214.60" y="75.30" width="6.80" height="6.80" fill="#f1f08a" stroke="#dede6a" stroke-width="0.5" rx="1" />
<text x="218.00" y="80.70" class="tiny" text-anchor="middle" style="fill:#4a5a20" >!</text>
<text x="218.00" y="87.50" class="tiny" text-anchor="middle" style="fill:#222" >2</text>
<line x1="229.40" y1="74.50" x2="229.40" y2="88.50" stroke="#8c8c8c" stroke-width="1.0" />
<rect x="232.40" y="73.20" width="18.20" height="15.40" fill="#cce4f7" stroke="#9ccbee" stroke-width="0.8" />
<text x="260.00" y="84.60" class="tb" text-anchor="middle" >TCP</text>
<text x="278.80" y="84.60" class="tb" text-anchor="middle" >SCR</text>
<text x="297.20" y="84.60" class="tb" text-anchor="middle" >EP1</text>
<text x="316.00" y="84.60" class="tb" text-anchor="middle" >EP2</text>
<text x="334.80" y="84.60" class="tb" text-anchor="middle" >SQ</text>
<text x="353.20" y="84.60" class="tb" text-anchor="middle" >PG</text>
<text x="372.20" y="84.60" class="tb" text-anchor="middle" >PC</text>
<text x="242.30" y="84.80" class="tbb" text-anchor="middle" >ALL</text>
<line x1="383.50" y1="74.50" x2="383.50" y2="88.50" stroke="#8c8c8c" stroke-width="1.0" />
<rect x="391.00" y="76.30" width="9.00" height="10.00" fill="#e6f3df" stroke="#d4e8cc" stroke-width="0.8" opacity="0.9" />
<rect x="393.00" y="78.30" width="5.00" height="3.00" fill="#cfe6c4" opacity="0.9" />
<rect x="409.00" y="76.30" width="10.80" height="10.00" fill="#dcecfb" stroke="#6aa7e6" stroke-width="0.9" />
<rect x="409.00" y="76.30" width="10.80" height="2.40" fill="#4b93de" />
<rect x="410.80" y="79.90" width="4.40" height="3.20" fill="#f8fbff" stroke="#5a9be0" stroke-width="0.6" />
<path d="M415.0 82.1h4.4v4h-4.4z" fill="#3f88d8" />
<line x1="430.60" y1="74.00" x2="430.60" y2="89.00" stroke="#b8b8b8" stroke-width="1.1" stroke-dasharray="1.1 1.5"/>
<circle cx="443.40" cy="81.30" r="5.40" fill="#4a93dc" stroke="#2f78c6" stroke-width="0.7"/>
<rect x="442.50" y="77.70" width="1.80" height="4.40" fill="#ffffff" rx="0.6" />
<circle cx="443.40" cy="84.10" r="1.05" fill="#ffffff"/>
<path d="M457.4 75.6l12.2 11.6 M469.59999999999997 75.6l-12.2 11.6" fill="none" stroke="#e2566a" stroke-width="2.3" />
<text x="470.80" y="85.75" class="ixia" >IXIA</text>
<circle cx="499.00" cy="77.80" r="0.60" fill="#444"/>
<line x1="18.60" y1="94.50" x2="18.60" y2="109.50" stroke="#b8b8b8" stroke-width="1.1" stroke-dasharray="1.1 1.5"/>
<path d="M27.900000000000002 99.80000000000001h9.6v7h-9.6z" fill="#f6e794" stroke="#bf9d36" stroke-width="0.9" />
<path d="M28.700000000000003 99.60000000000001l2-3.6 4.6-0.6 2 3z" fill="#3a3a3a" />
<rect x="30.50" y="96.60" width="1.60" height="1.50" fill="#ffffff" />
<rect x="33.30" y="97.40" width="1.60" height="1.50" fill="#ffffff" />
<path d="M47.4 107.0l4.4-7" fill="none" stroke="#3f9a45" stroke-width="1.8" />
<path d="M46 100.80000000000001l3 1.6 M48.2 105.80000000000001l3.2 0.4" fill="none" stroke="#4aaa50" stroke-width="1.4" />
<path d="M49.6 96.60000000000001l5.2-1.4 2 3.4-4.4 2.6z" fill="#8c2f36" stroke="#5a2226" stroke-width="0.6" />
<rect x="51.40" y="97.00" width="1.60" height="1.50" fill="#ffffff" />
<rect x="53.60" y="98.40" width="1.40" height="1.40" fill="#e8e8e8" />
<g opacity="0.55">
<path d="M65.80000000000001 106.80000000000001l1.4-5 2.4-1 2.2 1.4 1 4.6z" fill="#f2b4b4" stroke="#eaa0a0" stroke-width="0.6" />
<circle cx="69.80" cy="98.00" r="2.20" fill="#f4c4c0"/>
<path d="M70.4 96.80000000000001l4-1" fill="none" stroke="#d8d8e4" stroke-width="1.6" />
</g>
<path d="M82.6 96.0l4 3.6 M92.19999999999999 96.0l-3.6 3.6" fill="none" stroke="#3c3c44" stroke-width="1.5" />
<rect x="82.00" y="95.60" width="3.00" height="2.80" fill="#3a4260" />
<rect x="90.20" y="95.60" width="3.00" height="2.80" fill="#3a4260" />
<rect x="85.20" y="98.40" width="4.80" height="4.40" fill="#55608a" stroke="#2f3758" stroke-width="0.6" />
<rect x="86.40" y="99.60" width="2.20" height="1.80" fill="#e8e8f0" />
<rect x="82.00" y="103.60" width="4.60" height="3.60" fill="#4f7ed0" stroke="#3560b0" stroke-width="0.6" />
<rect x="88.60" y="103.60" width="4.60" height="3.60" fill="#4f7ed0" stroke="#3560b0" stroke-width="0.6" />
<path d="M106.4 96.80000000000001c4.2-1 6.2 2.6 4 6.2l-3.4 4.4-3.2-1.2z" fill="#f0b43c" stroke="#cf8f24" stroke-width="0.7" />
<path d="M100.8 99.4l3.2-3.8 4.4 1.4-1.8 4.2z" fill="#3a3a3a" />
<rect x="103.40" y="97.00" width="1.60" height="1.50" fill="#ffffff" />
<rect x="105.80" y="98.60" width="1.50" height="1.40" fill="#ffffff" />
<path d="M103.6 102.60000000000001l1 4.6" fill="none" stroke="#d49a3a" stroke-width="2.0" />
<line x1="123.00" y1="94.50" x2="123.00" y2="109.50" stroke="#b8b8b8" stroke-width="1.1" stroke-dasharray="1.1 1.5"/>
<g opacity="0.6">
<rect x="130.20" y="96.80" width="4.00" height="3.20" fill="#c4ccd6" />
<rect x="137.00" y="96.80" width="4.00" height="3.20" fill="#c4ccd6" />
<rect x="130.20" y="102.80" width="4.00" height="3.20" fill="#c4ccd6" />
<rect x="137.00" y="102.80" width="4.00" height="3.20" fill="#c4ccd6" />
<path d="M134.2 98.4h2.8 M134.2 104.4h2.8" fill="none" stroke="#c4ccd6" stroke-width="1" />
</g>
<g opacity="0.6">
<rect x="148.80" y="96.80" width="4.00" height="3.20" fill="#b9cfe6" />
<rect x="155.60" y="96.80" width="4.00" height="3.20" fill="#b9cfe6" />
<rect x="148.80" y="102.80" width="4.00" height="3.20" fill="#b9cfe6" />
<rect x="155.60" y="102.80" width="4.00" height="3.20" fill="#c8d6e4" />
<path d="M152.79999999999998 98.4h2.8 M152.79999999999998 104.4h2.8" fill="none" stroke="#b9cfe6" stroke-width="1" />
</g>
<g opacity="0.6">
<rect x="167.60" y="96.80" width="4.00" height="3.20" fill="#b4d8b4" />
<rect x="174.40" y="96.80" width="4.00" height="3.20" fill="#b4d8b4" />
<rect x="167.60" y="102.80" width="4.00" height="3.20" fill="#b4d8b4" />
<rect x="174.40" y="102.80" width="4.00" height="3.20" fill="#c4ccd6" />
<path d="M171.6 98.4h2.8 M171.6 104.4h2.8" fill="none" stroke="#b4d8b4" stroke-width="1" />
</g>
<line x1="183.60" y1="95.00" x2="183.60" y2="109.00" stroke="#8c8c8c" stroke-width="1.0" />
<rect x="190.20" y="97.00" width="3.60" height="3.00" fill="#4a5878" />
<rect x="197.40" y="97.00" width="3.60" height="3.00" fill="#4a5878" />
<rect x="190.20" y="102.80" width="3.60" height="3.00" fill="#4a5878" />
<rect x="197.40" y="102.80" width="3.60" height="3.00" fill="#4a5878" />
<line x1="193.80" y1="98.50" x2="197.40" y2="98.50" stroke="#4a5878" stroke-width="1.1" />
<line x1="193.80" y1="104.30" x2="197.40" y2="104.30" stroke="#4a5878" stroke-width="1.1" />
<g opacity="0.6">
<rect x="209.80" y="96.40" width="9.20" height="3.60" fill="#eeaaa8" />
<rect x="209.00" y="102.80" width="4.00" height="3.20" fill="#cdd3dc" />
<rect x="215.80" y="102.80" width="4.00" height="3.20" fill="#cdd3dc" />
<line x1="214.40" y1="100.00" x2="214.40" y2="102.80" stroke="#d8c0c0" stroke-width="1.2" />
</g>
<line x1="226.20" y1="95.00" x2="226.20" y2="109.00" stroke="#8c8c8c" stroke-width="1.0" />
<g opacity="0.7">
<rect x="233.00" y="100.00" width="10.00" height="6.00" fill="#e2d8c6" stroke="#d6cab4" stroke-width="0.6" />
<rect x="235.00" y="97.00" width="6.00" height="3.40" fill="#e8dccb" />
<rect x="236.00" y="101.80" width="4.00" height="2.00" fill="#f0c8c0" />
</g>
</g>
<text x="20.60" y="123.10" class="m" >Test Setup</text>
<text x="76.50" y="121.40" class="m" >Throughput</text>
<text x="132.50" y="123.10" class="m" >Transaction Rate</text>
<text x="216.00" y="123.10" class="m" >Response Time</text>
<text x="285.60" y="123.10" class="m" >Raw Data Totals</text>
<text x="365.00" y="123.10" class="m" >Endpoint Configuration</text>
<line x1="128.10" y1="113.80" x2="128.10" y2="126.20" stroke="#444" stroke-width="1.0" />
<line x1="210.60" y1="113.80" x2="210.60" y2="126.20" stroke="#444" stroke-width="1.0" />
<line x1="280.30" y1="113.80" x2="280.30" y2="126.20" stroke="#444" stroke-width="1.0" />
<line x1="359.40" y1="113.80" x2="359.40" y2="126.20" stroke="#444" stroke-width="1.0" />
<line x1="471.20" y1="113.80" x2="471.20" y2="126.20" stroke="#444" stroke-width="1.0" />
<rect x="72.60" y="115.00" width="53.80" height="10.60" fill="none" stroke="#555" stroke-width="0.9" stroke-dasharray="1 0.6"/>
<rect x="17.30" y="128.50" width="609.60" height="140.00" fill="#ffffff" />
<rect x="17.30" y="128.50" width="596.50" height="27.50" fill="#f0f0f0" />
<clipPath id="hc1"><rect x="17.3" y="128.5" width="596.50" height="126"/></clipPath>
<g clip-path="url(#hc1)">
<line x1="18.50" y1="129.60" x2="18.50" y2="155.00" stroke="#ffffff" stroke-width="0.9" />
<line x1="127.45" y1="129.60" x2="127.45" y2="155.00" stroke="#ffffff" stroke-width="0.9" />
<line x1="183.30" y1="129.60" x2="183.30" y2="155.00" stroke="#ffffff" stroke-width="0.9" />
<line x1="239.20" y1="129.60" x2="239.20" y2="155.00" stroke="#ffffff" stroke-width="0.9" />
<line x1="313.70" y1="129.60" x2="313.70" y2="155.00" stroke="#ffffff" stroke-width="0.9" />
<line x1="388.30" y1="129.60" x2="388.30" y2="155.00" stroke="#ffffff" stroke-width="0.9" />
<line x1="430.80" y1="129.60" x2="430.80" y2="155.00" stroke="#ffffff" stroke-width="0.9" />
<line x1="472.70" y1="129.60" x2="472.70" y2="155.00" stroke="#ffffff" stroke-width="0.9" />
<line x1="515.80" y1="129.60" x2="515.80" y2="155.00" stroke="#ffffff" stroke-width="0.9" />
<line x1="571.70" y1="129.60" x2="571.70" y2="155.00" stroke="#ffffff" stroke-width="0.9" />
<line x1="17.30" y1="129.80" x2="613.80" y2="129.80" stroke="#ffffff" stroke-width="0.9" />
<line x1="126.25" y1="128.50" x2="126.25" y2="156.20" stroke="#161616" stroke-width="1.15" />
<line x1="182.10" y1="128.50" x2="182.10" y2="156.20" stroke="#161616" stroke-width="1.15" />
<line x1="238.00" y1="128.50" x2="238.00" y2="156.20" stroke="#161616" stroke-width="1.15" />
<line x1="312.50" y1="128.50" x2="312.50" y2="156.20" stroke="#161616" stroke-width="1.15" />
<line x1="387.10" y1="128.50" x2="387.10" y2="156.20" stroke="#161616" stroke-width="1.15" />
<line x1="429.60" y1="128.50" x2="429.60" y2="156.20" stroke="#161616" stroke-width="1.15" />
<line x1="471.50" y1="128.50" x2="471.50" y2="156.20" stroke="#161616" stroke-width="1.15" />
<line x1="514.60" y1="128.50" x2="514.60" y2="156.20" stroke="#161616" stroke-width="1.15" />
<line x1="570.50" y1="128.50" x2="570.50" y2="156.20" stroke="#161616" stroke-width="1.15" />
<line x1="17.30" y1="156.10" x2="613.80" y2="156.10" stroke="#161616" stroke-width="1.15" />
<text x="20.70" y="149.60" class="m" >Group</text>
<text x="129.65" y="140.70" class="m" >Pair Group</text>
<text x="129.65" y="149.60" class="m" >Name</text>
<text x="186.10" y="149.60" class="m" >Run Status</text>
<text x="309.10" y="140.70" class="m" text-anchor="end" >Timing Records</text>
<text x="309.10" y="149.60" class="m" text-anchor="end" >Completed</text>
<text x="383.70" y="140.70" class="m" text-anchor="end" >95% Confidence</text>
<text x="383.70" y="149.60" class="m" text-anchor="end" >Interval</text>
<text x="426.20" y="140.70" class="m" text-anchor="end" >Average</text>
<text x="426.20" y="149.60" class="m" text-anchor="end" >(Mbps)</text>
<text x="468.10" y="140.70" class="m" text-anchor="end" >Minimum</text>
<text x="468.10" y="149.60" class="m" text-anchor="end" >(Mbps)</text>
<text x="511.20" y="140.70" class="m" text-anchor="end" >Maximum</text>
<text x="511.20" y="149.60" class="m" text-anchor="end" >(Mbps)</text>
<text x="567.10" y="140.70" class="m" text-anchor="end" >Measured</text>
<text x="567.10" y="149.60" class="m" text-anchor="end" >Time (sec)</text>
<text x="618.80" y="140.70" class="m" text-anchor="end" >Relative</text>
<text x="618.80" y="149.60" class="m" text-anchor="end" >Precision</text>
<rect x="39.00" y="158.30" width="8.60" height="8.30" fill="#ececec" stroke="#2a2a2a" stroke-width="1.1" />
<line x1="40.90" y1="162.50" x2="45.70" y2="162.50" stroke="#111" stroke-width="1.3" />
<text x="55.00" y="165.00" class="mb" >All Pairs</text>
<text x="311.50" y="165.00" class="mb" text-anchor="end" >991</text>
<text x="428.80" y="165.00" class="mb" text-anchor="end" >934.564</text>
<text x="470.70" y="165.00" class="mb" text-anchor="end" >87.051</text>
<text x="513.80" y="165.00" class="mb" text-anchor="end" >105.960</text>
<rect x="17.90" y="169.00" width="595.90" height="12.40" fill="#0a78d6" />
<path d="M22.8 180.2v-7.2l2.4-2.6h4.6l3.2 2.6v7.2z" fill="#dfeaf8" opacity="0.85" />
<path d="M23.4 179.6v-6l2.2-0.8v6.8z" fill="#1c2c74" stroke="#151a3a" stroke-width="0.5" />
<path d="M25.5 179.6v-8.6h2.3v8.6z" fill="#2058b0" stroke="#1a2750" stroke-width="0.5" />
<path d="M27.7 179.6v-7.8h2.2v7.8z" fill="#ecc320" stroke="#6a5510" stroke-width="0.5" />
<path d="M29.799999999999997 179.6v-6.6l2.6 0.6v6z" fill="#bc221c" stroke="#4a1210" stroke-width="0.5" />
<rect x="23.30" y="179.10" width="9.20" height="0.90" fill="#2a2a30" />
<line x1="57.40" y1="168.10" x2="57.40" y2="180.70" stroke="#e8f2ff" stroke-width="0.9" />
<line x1="57.40" y1="175.70" x2="70.20" y2="175.70" stroke="#e8f2ff" stroke-width="0.9" />
<text x="92.00" y="177.50" class="m w" >Pair 1</text>
<text x="129.25" y="177.50" class="m w" >No Group</text>
<text x="185.70" y="177.50" class="m w" >Finished</text>
<text x="310.40" y="177.50" class="m w" text-anchor="end" >99</text>
<text x="385.00" y="177.50" class="m w" text-anchor="end" >-0.087 : +0.087</text>
<text x="427.50" y="177.50" class="m w" text-anchor="end" >94.196</text>
<text x="469.40" y="177.50" class="m w" text-anchor="end" >90.090</text>
<text x="512.50" y="177.50" class="m w" text-anchor="end" >94.340</text>
<text x="568.40" y="177.50" class="m w" text-anchor="end" >84.080</text>
<text x="619.30" y="177.50" class="m w" text-anchor="end" >0.092</text>
<path d="M23.4 192.04999999999998v-6l2.2-0.8v6.8z" fill="#1c2c74" stroke="#151a3a" stroke-width="0.5" />
<path d="M25.5 192.04999999999998v-8.6h2.3v8.6z" fill="#2058b0" stroke="#1a2750" stroke-width="0.5" />
<path d="M27.7 192.04999999999998v-7.8h2.2v7.8z" fill="#ecc320" stroke="#6a5510" stroke-width="0.5" />
<path d="M29.799999999999997 192.04999999999998v-6.6l2.6 0.6v6z" fill="#bc221c" stroke="#4a1210" stroke-width="0.5" />
<rect x="23.30" y="191.55" width="9.20" height="0.90" fill="#2a2a30" />
<line x1="57.40" y1="180.55" x2="57.40" y2="193.15" stroke="#8a8a8a" stroke-width="0.9" />
<line x1="57.40" y1="188.15" x2="70.20" y2="188.15" stroke="#8a8a8a" stroke-width="0.9" />
<text x="92.00" y="189.95" class="m" >Pair 2</text>
<text x="129.25" y="189.95" class="m" >No Group</text>
<text x="185.70" y="189.95" class="m" >Finished</text>
<text x="310.40" y="189.95" class="m" text-anchor="end" >99</text>
<text x="385.00" y="189.95" class="m" text-anchor="end" >-0.203 : +0.203</text>
<text x="427.50" y="189.95" class="m" text-anchor="end" >94.342</text>
<text x="469.40" y="189.95" class="m" text-anchor="end" >93.787</text>
<text x="512.50" y="189.95" class="m" text-anchor="end" >105.541</text>
<text x="568.40" y="189.95" class="m" text-anchor="end" >83.950</text>
<text x="619.30" y="189.95" class="m" text-anchor="end" >0.215</text>
<path d="M23.4 204.5v-6l2.2-0.8v6.8z" fill="#1c2c74" stroke="#151a3a" stroke-width="0.5" />
<path d="M25.5 204.5v-8.6h2.3v8.6z" fill="#2058b0" stroke="#1a2750" stroke-width="0.5" />
<path d="M27.7 204.5v-7.8h2.2v7.8z" fill="#ecc320" stroke="#6a5510" stroke-width="0.5" />
<path d="M29.799999999999997 204.5v-6.6l2.6 0.6v6z" fill="#bc221c" stroke="#4a1210" stroke-width="0.5" />
<rect x="23.30" y="204.00" width="9.20" height="0.90" fill="#2a2a30" />
<line x1="57.40" y1="193.00" x2="57.40" y2="205.60" stroke="#8a8a8a" stroke-width="0.9" />
<line x1="57.40" y1="200.60" x2="70.20" y2="200.60" stroke="#8a8a8a" stroke-width="0.9" />
<text x="92.00" y="202.40" class="m" >Pair 3</text>
<text x="129.25" y="202.40" class="m" >No Group</text>
<text x="185.70" y="202.40" class="m" >Finished</text>
<text x="310.40" y="202.40" class="m" text-anchor="end" >99</text>
<text x="385.00" y="202.40" class="m" text-anchor="end" >-0.156 : +0.156</text>
<text x="427.50" y="202.40" class="m" text-anchor="end" >94.165</text>
<text x="469.40" y="202.40" class="m" text-anchor="end" >87.051</text>
<text x="512.50" y="202.40" class="m" text-anchor="end" >94.340</text>
<text x="568.40" y="202.40" class="m" text-anchor="end" >84.108</text>
<text x="619.30" y="202.40" class="m" text-anchor="end" >0.166</text>
<path d="M23.4 216.95v-6l2.2-0.8v6.8z" fill="#1c2c74" stroke="#151a3a" stroke-width="0.5" />
<path d="M25.5 216.95v-8.6h2.3v8.6z" fill="#2058b0" stroke="#1a2750" stroke-width="0.5" />
<path d="M27.7 216.95v-7.8h2.2v7.8z" fill="#ecc320" stroke="#6a5510" stroke-width="0.5" />
<path d="M29.799999999999997 216.95v-6.6l2.6 0.6v6z" fill="#bc221c" stroke="#4a1210" stroke-width="0.5" />
<rect x="23.30" y="216.45" width="9.20" height="0.90" fill="#2a2a30" />
<line x1="57.40" y1="205.45" x2="57.40" y2="218.05" stroke="#8a8a8a" stroke-width="0.9" />
<line x1="57.40" y1="213.05" x2="70.20" y2="213.05" stroke="#8a8a8a" stroke-width="0.9" />
<text x="92.00" y="214.85" class="m" >Pair 4</text>
<text x="129.25" y="214.85" class="m" >No Group</text>
<text x="185.70" y="214.85" class="m" >Finished</text>
<text x="310.40" y="214.85" class="m" text-anchor="end" >99</text>
<text x="385.00" y="214.85" class="m" text-anchor="end" >-0.059 : +0.059</text>
<text x="427.50" y="214.85" class="m" text-anchor="end" >94.209</text>
<text x="469.40" y="214.85" class="m" text-anchor="end" >91.429</text>
<text x="512.50" y="214.85" class="m" text-anchor="end" >94.340</text>
<text x="568.40" y="214.85" class="m" text-anchor="end" >84.068</text>
<text x="619.30" y="214.85" class="m" text-anchor="end" >0.063</text>
<path d="M23.4 229.4v-6l2.2-0.8v6.8z" fill="#1c2c74" stroke="#151a3a" stroke-width="0.5" />
<path d="M25.5 229.4v-8.6h2.3v8.6z" fill="#2058b0" stroke="#1a2750" stroke-width="0.5" />
<path d="M27.7 229.4v-7.8h2.2v7.8z" fill="#ecc320" stroke="#6a5510" stroke-width="0.5" />
<path d="M29.799999999999997 229.4v-6.6l2.6 0.6v6z" fill="#bc221c" stroke="#4a1210" stroke-width="0.5" />
<rect x="23.30" y="228.90" width="9.20" height="0.90" fill="#2a2a30" />
<line x1="57.40" y1="217.90" x2="57.40" y2="230.50" stroke="#8a8a8a" stroke-width="0.9" />
<line x1="57.40" y1="225.50" x2="70.20" y2="225.50" stroke="#8a8a8a" stroke-width="0.9" />
<text x="92.00" y="227.30" class="m" >Pair 5</text>
<text x="129.25" y="227.30" class="m" >No Group</text>
<text x="185.70" y="227.30" class="m" >Finished</text>
<text x="310.40" y="227.30" class="m" text-anchor="end" >99</text>
<text x="385.00" y="227.30" class="m" text-anchor="end" >-0.206 : +0.206</text>
<text x="427.50" y="227.30" class="m" text-anchor="end" >94.339</text>
<text x="469.40" y="227.30" class="m" text-anchor="end" >93.787</text>
<text x="512.50" y="227.30" class="m" text-anchor="end" >105.680</text>
<text x="568.40" y="227.30" class="m" text-anchor="end" >83.953</text>
<text x="619.30" y="227.30" class="m" text-anchor="end" >0.218</text>
<path d="M23.4 241.85v-6l2.2-0.8v6.8z" fill="#1c2c74" stroke="#151a3a" stroke-width="0.5" />
<path d="M25.5 241.85v-8.6h2.3v8.6z" fill="#2058b0" stroke="#1a2750" stroke-width="0.5" />
<path d="M27.7 241.85v-7.8h2.2v7.8z" fill="#ecc320" stroke="#6a5510" stroke-width="0.5" />
<path d="M29.799999999999997 241.85v-6.6l2.6 0.6v6z" fill="#bc221c" stroke="#4a1210" stroke-width="0.5" />
<rect x="23.30" y="241.35" width="9.20" height="0.90" fill="#2a2a30" />
<line x1="57.40" y1="230.35" x2="57.40" y2="242.95" stroke="#8a8a8a" stroke-width="0.9" />
<line x1="57.40" y1="237.95" x2="70.20" y2="237.95" stroke="#8a8a8a" stroke-width="0.9" />
<text x="92.00" y="239.75" class="m" >Pair 6</text>
<text x="129.25" y="239.75" class="m" >No Group</text>
<text x="185.70" y="239.75" class="m" >Finished</text>
<text x="310.40" y="239.75" class="m" text-anchor="end" >99</text>
<text x="385.00" y="239.75" class="m" text-anchor="end" >-0.061 : +0.061</text>
<text x="427.50" y="239.75" class="m" text-anchor="end" >94.206</text>
<text x="469.40" y="239.75" class="m" text-anchor="end" >91.324</text>
<text x="512.50" y="239.75" class="m" text-anchor="end" >94.340</text>
<text x="568.40" y="239.75" class="m" text-anchor="end" >84.071</text>
<text x="619.30" y="239.75" class="m" text-anchor="end" >0.065</text>
<path d="M23.4 254.29999999999998v-6l2.2-0.8v6.8z" fill="#1c2c74" stroke="#151a3a" stroke-width="0.5" />
<path d="M25.5 254.29999999999998v-8.6h2.3v8.6z" fill="#2058b0" stroke="#1a2750" stroke-width="0.5" />
<path d="M27.7 254.29999999999998v-7.8h2.2v7.8z" fill="#ecc320" stroke="#6a5510" stroke-width="0.5" />
<path d="M29.799999999999997 254.29999999999998v-6.6l2.6 0.6v6z" fill="#bc221c" stroke="#4a1210" stroke-width="0.5" />
<rect x="23.30" y="253.80" width="9.20" height="0.90" fill="#2a2a30" />
<line x1="57.40" y1="242.80" x2="57.40" y2="255.40" stroke="#8a8a8a" stroke-width="0.9" />
<line x1="57.40" y1="250.40" x2="70.20" y2="250.40" stroke="#8a8a8a" stroke-width="0.9" />
<text x="92.00" y="252.20" class="m" >Pair 7</text>
<text x="129.25" y="252.20" class="m" >No Group</text>
<text x="185.70" y="252.20" class="m" >Finished</text>
<text x="310.40" y="252.20" class="m" text-anchor="end" >99</text>
<text x="385.00" y="252.20" class="m" text-anchor="end" >-0.058 : +0.058</text>
<text x="427.50" y="252.20" class="m" text-anchor="end" >94.208</text>
<text x="469.40" y="252.20" class="m" text-anchor="end" >91.429</text>
<text x="512.50" y="252.20" class="m" text-anchor="end" >94.340</text>
<text x="568.40" y="252.20" class="m" text-anchor="end" >84.069</text>
<text x="619.30" y="252.20" class="m" text-anchor="end" >0.062</text>
</g>
<rect x="613.80" y="129.00" width="13.10" height="126.00" fill="#f0f0f0" />
<path d="M617.35 137.6l2.6-2.8 2.6 2.8" fill="none" stroke="#505050" stroke-width="1.2" />
<path d="M617.35 246.6l2.6 2.8 2.6-2.8" fill="none" stroke="#505050" stroke-width="1.2" />
<rect x="614.40" y="142.00" width="10.80" height="63.00" fill="#c1c1c1" />
<rect x="17.80" y="255.00" width="609.10" height="12.60" fill="#f0f0f0" />
<rect x="31.00" y="255.00" width="542.80" height="12.60" fill="#cdcdcd" />
<path d="M26 258.4l-2.8 2.7 2.8 2.7" fill="none" stroke="#3a3a3a" stroke-width="1.3" />
<path d="M604.8 258.4l2.8 2.7-2.8 2.7" fill="none" stroke="#3a3a3a" stroke-width="1.3" />
<line x1="17.30" y1="128.20" x2="17.30" y2="268.50" stroke="#262626" stroke-width="1.1" />
<line x1="16.80" y1="128.50" x2="626.90" y2="128.50" stroke="#262626" stroke-width="1.1" />
<line x1="626.90" y1="128.50" x2="626.90" y2="268.50" stroke="#a8a8a8" stroke-width="1.0" />
<line x1="17.30" y1="268.30" x2="627.40" y2="268.30" stroke="#4a4a4a" stroke-width="1.0" />
<rect x="17.30" y="268.80" width="610.00" height="5.80" fill="#bcbcbc" />
<line x1="17.30" y1="274.30" x2="626.90" y2="274.30" stroke="#a6a6a6" stroke-width="0.8" />
<rect x="14.10" y="274.70" width="485.30" height="140.00" fill="#ffffff" />
<rect x="499.40" y="274.70" width="6.20" height="140.00" fill="#b9b9b9" />
<line x1="499.60" y1="274.70" x2="499.60" y2="415.00" stroke="#9c9c9c" stroke-width="0.8" />
<line x1="505.40" y1="274.70" x2="505.40" y2="415.00" stroke="#9c9c9c" stroke-width="0.8" />
<rect x="505.60" y="274.70" width="121.70" height="140.00" fill="#ffffff" />
<text x="25.6" y="293.8" class="gt">Throughput</text>
<line x1="69.40" y1="322.60" x2="472.00" y2="322.60" stroke="#d2d2d2" stroke-width="1.2" />
<line x1="69.40" y1="340.80" x2="472.00" y2="340.80" stroke="#d2d2d2" stroke-width="1.2" />
<line x1="69.40" y1="358.90" x2="472.00" y2="358.90" stroke="#d2d2d2" stroke-width="1.2" />
<line x1="69.40" y1="377.00" x2="472.00" y2="377.00" stroke="#d2d2d2" stroke-width="1.2" />
<line x1="69.40" y1="395.20" x2="472.00" y2="395.20" stroke="#d2d2d2" stroke-width="1.2" />
<line x1="164.20" y1="303.50" x2="164.20" y2="410.00" stroke="#d0d0d0" stroke-width="0.9" />
<line x1="259.00" y1="303.50" x2="259.00" y2="410.00" stroke="#d0d0d0" stroke-width="0.9" />
<line x1="353.80" y1="303.50" x2="353.80" y2="410.00" stroke="#d0d0d0" stroke-width="0.9" />
<line x1="65.60" y1="303.50" x2="69.40" y2="303.50" stroke="#2a2a2a" stroke-width="1.0" />
<text x="60.90" y="306.30" class="ax" text-anchor="end" >111.15</text>
<line x1="65.60" y1="322.60" x2="69.40" y2="322.60" stroke="#2a2a2a" stroke-width="1.0" />
<text x="60.90" y="325.40" class="ax" text-anchor="end" >107.00</text>
<line x1="65.60" y1="340.80" x2="69.40" y2="340.80" stroke="#2a2a2a" stroke-width="1.0" />
<text x="60.90" y="343.60" class="ax" text-anchor="end" >103.00</text>
<line x1="65.60" y1="358.90" x2="69.40" y2="358.90" stroke="#2a2a2a" stroke-width="1.0" />
<text x="60.90" y="361.70" class="ax" text-anchor="end" >99.00</text>
<line x1="65.60" y1="377.00" x2="69.40" y2="377.00" stroke="#2a2a2a" stroke-width="1.0" />
<text x="60.90" y="379.80" class="ax" text-anchor="end" >95.00</text>
<line x1="65.60" y1="395.20" x2="69.40" y2="395.20" stroke="#2a2a2a" stroke-width="1.0" />
<text x="60.90" y="398.00" class="ax" text-anchor="end" >91.00</text>
<line x1="69.40" y1="303.50" x2="472.00" y2="303.50" stroke="#2a2a2a" stroke-width="1.0" />
<line x1="69.40" y1="303.10" x2="69.40" y2="410.00" stroke="#2a2a2a" stroke-width="1.0" />
<line x1="472.00" y1="303.10" x2="472.00" y2="410.00" stroke="#3a3a3a" stroke-width="1.0" />
<text transform="translate(30.6,368.60) rotate(-90)" class="mbps">Mbps</text>
<path d="M69.8 410L70 352 70.4 334 71.2 362 72.2 377 74.6 380.4" fill="none" stroke="#202020" stroke-width="0.9" />
<path d="M69.8 326L70.4 345 71.2 370 73.6 380.4" fill="none" stroke="#a4b030" stroke-width="0.9" />
<path d="M70.2 336L70.8 354" fill="none" stroke="#50c850" stroke-width="0.8" />
<path d="M70.2 410L70.8 396 72 386 74.6 380.6" fill="none" stroke="#f02848" stroke-width="1.1" />
<path d="M69.9 410L70.3 390" fill="none" stroke="#ff30ff" stroke-width="0.9" />
<path d="M70 366L71 373 72.5 378.4 74.6 380.4" fill="none" stroke="#8a3aa0" stroke-width="0.9" />
<line x1="74.40" y1="380.50" x2="469.00" y2="380.50" stroke="#8a28a8" stroke-width="1.1" />
<line x1="69.90" y1="380.90" x2="76.00" y2="380.90" stroke="#b03080" stroke-width="0.8" />
<path d="M415 380.7q4 1.6 8 0" fill="none" stroke="#4060d0" stroke-width="0.8" />
<line x1="629.50" y1="127.00" x2="629.50" y2="420.00" stroke="#5c5c5c" stroke-width="1.8" />
<text x="566.20" y="286.90" class="lg" text-anchor="middle" >Legend</text>
<rect x="506.00" y="292.20" width="120.90" height="125.00" fill="#ffffff" stroke="#727272" stroke-width="1.0" />
<rect x="613.80" y="292.80" width="12.70" height="125.00" fill="#f0f0f0" />
<path d="M616.8 301.2l2.6-2.8 2.6 2.8" fill="none" stroke="#c0c0c0" stroke-width="1.2" />
<line x1="511.90" y1="296.40" x2="526.30" y2="296.40" stroke="#ff2020" stroke-width="1.0" />
<text x="529.80" y="299.30" class="lm" style="fill:#ff2020" >Pair 1</text>
<line x1="511.90" y1="304.97" x2="526.30" y2="304.97" stroke="#20f020" stroke-width="1.0" />
<text x="529.80" y="307.87" class="lm" style="fill:#20f020" >Pair 2</text>
<line x1="511.90" y1="313.54" x2="526.30" y2="313.54" stroke="#ff20ff" stroke-width="1.0" />
<text x="529.80" y="316.44" class="lm" style="fill:#ff20ff" >Pair 3</text>
<line x1="511.90" y1="322.11" x2="526.30" y2="322.11" stroke="#40e8e8" stroke-width="1.0" />
<text x="529.80" y="325.01" class="lm" style="fill:#40e8e8" >Pair 4</text>
<line x1="511.90" y1="330.68" x2="526.30" y2="330.68" stroke="#202020" stroke-width="1.0" />
<text x="529.80" y="333.58" class="lm" style="fill:#202020" >Pair 5</text>
<line x1="511.90" y1="339.25" x2="526.30" y2="339.25" stroke="#8c8c30" stroke-width="1.0" />
<text x="529.80" y="342.15" class="lm" style="fill:#8c8c30" >Pair 6</text>
<line x1="511.90" y1="347.82" x2="526.30" y2="347.82" stroke="#a89040" stroke-width="1.0" />
<text x="529.80" y="350.72" class="lm" style="fill:#a89040" >Pair 7</text>
<line x1="511.90" y1="356.39" x2="526.30" y2="356.39" stroke="#202090" stroke-width="1.0" />
<text x="529.80" y="359.29" class="lm" style="fill:#202090" >Pair 8</text>
<line x1="511.90" y1="364.96" x2="526.30" y2="364.96" stroke="#98a828" stroke-width="1.0" />
<text x="529.80" y="367.86" class="lm" style="fill:#98a828" >Pair 9</text>
<line x1="511.90" y1="373.53" x2="526.30" y2="373.53" stroke="#8020a0" stroke-width="1.0" />
<text x="529.80" y="376.43" class="lm" style="fill:#8020a0" >Pair 10</text>
</g>
</svg>
</body></html>
